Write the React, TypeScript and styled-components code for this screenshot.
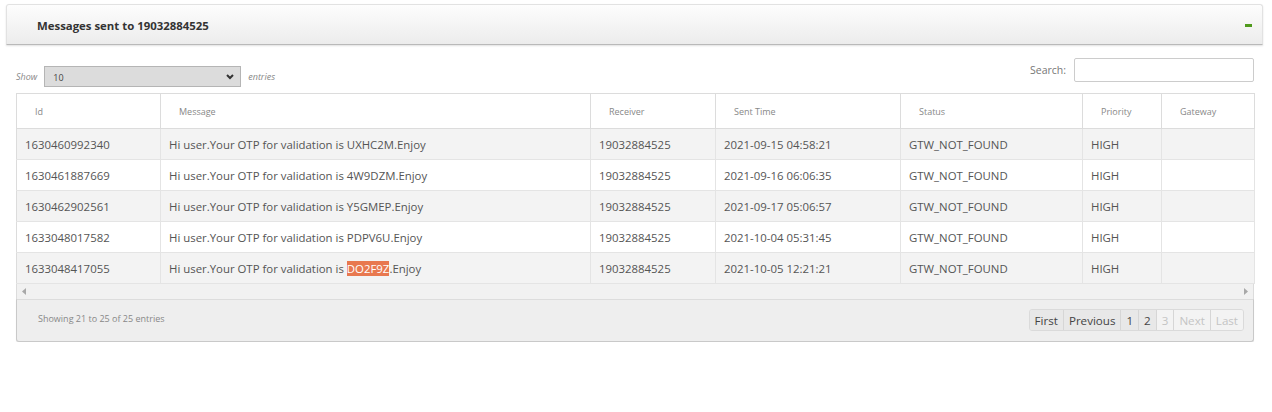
import React from "react";
import styled, { createGlobalStyle } from "styled-components";

const Global = createGlobalStyle`
  html, body { margin: 0; padding: 0; background: #fff; }
  body { font-family: "Open Sans", "Noto Sans", Arial, sans-serif; color: #555; }
`;

const Page = styled.div`
  padding: 4px 9px 0 6px;
  width: 1272px;
  box-sizing: border-box;
`;

const PanelHeader = styled.div`
  height: 41px;
  box-sizing: border-box;
  display: flex;
  align-items: center;
  justify-content: space-between;
  padding: 1px 10px 0 30px;
  background: linear-gradient(#fdfdfd, #ececec);
  border: 1px solid #e2e2e2;
  border-bottom: 1px solid #b9b9b9;
  border-radius: 3px 3px 0 0;
  box-shadow: 0 1px 2px rgba(0, 0, 0, 0.12);
`;

const Title = styled.h3`
  margin: 0;
  font-size: 11.4px;
  font-weight: 700;
  color: #333;
`;

const Minus = styled.span`
  display: block;
  width: 7px;
  height: 3px;
  background: #4f9a1c;
`;

const Body = styled.div`
  padding: 13px 9px 0 10px;
`;

const Controls = styled.div`
  display: flex;
  justify-content: space-between;
  align-items: flex-start;
  height: 35px;
`;

const LengthBox = styled.label`
  display: flex;
  align-items: center;
  gap: 7px;
  margin-top: 8px;
  font-size: 9px;
  font-style: italic;
  color: #888;
`;

const SelectBox = styled.div`
  position: relative;
  width: 197px;
  height: 21px;
  box-sizing: border-box;
  background: #dcdcdc;
  border: 1px solid #b5b5b5;
  font-size: 9px;
  font-style: normal;
  color: #444;
  display: flex;
  align-items: center;
  padding: 2px 0 0 8px;
`;

const Chevron = styled.svg`
  position: absolute;
  right: 6px;
  top: 7px;
`;

const SearchBox = styled.label`
  display: flex;
  align-items: center;
  gap: 8px;
  font-size: 10.5px;
  color: #777;
`;

const SearchInput = styled.div`
  width: 180px;
  height: 24px;
  box-sizing: border-box;
  border: 1px solid #ccc;
  border-radius: 2px;
  background: #fff;
`;

const Table = styled.table`
  width: 1238px;
  border-collapse: collapse;
  table-layout: fixed;
  border: 1px solid #dcdcdc;
`;

const Th = styled.th`
  height: 35px;
  padding: 0 0 0 18px;
  text-align: left;
  font-size: 9px;
  font-weight: 400;
  color: #888;
  border-right: 1px solid #dcdcdc;
  border-bottom: 1px solid #dcdcdc;
  box-sizing: border-box;
`;

const Row = styled.tr<{ $odd: boolean }>`
  background: ${(p) => (p.$odd ? "#f3f3f3" : "#fff")};
`;

const Td = styled.td`
  height: 31px;
  padding: 0 0 0 8px;
  font-size: 11.4px;
  color: #555;
  white-space: nowrap;
  border-right: 1px solid #e4e4e4;
  border-bottom: 1px solid #e4e4e4;
  box-sizing: border-box;
`;

const Mark = styled.span`
  background: #e8784f;
  color: #fff;
`;

const ScrollBar = styled.div`
  height: 15px;
  background: #f1f1f1;
  border-left: 1px solid #dcdcdc;
  border-right: 1px solid #dcdcdc;
  display: flex;
  align-items: center;
  justify-content: space-between;
  padding: 0 5px;
`;

const Footer = styled.div`
  height: 43px;
  box-sizing: border-box;
  background: #eeeeee;
  border: 1px solid #c9c9c9;
  border-top: 1px solid #dcdcdc;
  border-radius: 0 0 3px 3px;
  box-shadow: 0 1px 1px rgba(0, 0, 0, 0.08);
  display: flex;
  align-items: center;
  justify-content: space-between;
  padding: 0 9px 0 21px;
`;

const Info = styled.div`
  font-size: 9px;
  color: #888;
  margin-top: -5px;
`;

const Pager = styled.div`
  display: flex;
  border: 1px solid #dadada;
  border-radius: 3px;
  overflow: hidden;
  margin-top: -1px;
`;

const PageBtn = styled.span<{ $disabled?: boolean }>`
  height: 20px;
  line-height: 21px;
  padding: 0 5px;
  font-size: 11.6px;
  color: ${(p) => (p.$disabled ? "#c4c4c4" : "#444")};
  background: ${(p) => (p.$disabled ? "#f3f3f3" : "#e8e8e8")};
  border-left: 1px solid #d6d6d6;
  &:first-child { border-left: none; }
`;

const cols = [
  { name: "Id", w: 144 },
  { name: "Message", w: 430 },
  { name: "Receiver", w: 125 },
  { name: "Sent Time", w: 185 },
  { name: "Status", w: 182 },
  { name: "Priority", w: 79 },
  { name: "Gateway", w: 93 },
];

const rows = [
  ["1630460992340", "UXHC2M", "2021-09-15 04:58:21"],
  ["1630461887669", "4W9DZM", "2021-09-16 06:06:35"],
  ["1630462902561", "Y5GMEP", "2021-09-17 05:06:57"],
  ["1633048017582", "PDPV6U", "2021-10-04 05:31:45"],
  ["1633048417055", "DO2F9Z", "2021-10-05 12:21:21"],
];

export default function App() {
  return (
    <>
      <Global />
      <Page>
        <PanelHeader>
          <Title>Messages sent to 19032884525</Title>
          <Minus />
        </PanelHeader>
        <Body>
          <Controls>
            <LengthBox>
              Show
              <SelectBox>
                10
                <Chevron width="8" height="6" viewBox="0 0 8 6">
                  <path d="M1 1l3 3 3-3" stroke="#333" strokeWidth="2" fill="none" />
                </Chevron>
              </SelectBox>
              entries
            </LengthBox>
            <SearchBox>
              Search:
              <SearchInput />
            </SearchBox>
          </Controls>
          <Table>
            <colgroup>
              {cols.map((c) => (
                <col key={c.name} style={{ width: c.w }} />
              ))}
            </colgroup>
            <thead>
              <tr>
                {cols.map((c) => (
                  <Th key={c.name}>{c.name}</Th>
                ))}
              </tr>
            </thead>
            <tbody>
              {rows.map((r, i) => (
                <Row key={r[0]} $odd={i % 2 === 0}>
                  <Td>{r[0]}</Td>
                  <Td>
                    Hi user.Your OTP for validation is{" "}
                    {i === 4 ? <Mark>{r[1]}</Mark> : r[1]}.Enjoy
                  </Td>
                  <Td>19032884525</Td>
                  <Td>{r[2]}</Td>
                  <Td>GTW_NOT_FOUND</Td>
                  <Td>HIGH</Td>
                  <Td />
                </Row>
              ))}
            </tbody>
          </Table>
          <ScrollBar>
            <svg width="4" height="7" viewBox="0 0 4 7">
              <path d="M4 0v7L0 3.5z" fill="#a8a8a8" />
            </svg>
            <svg width="4" height="7" viewBox="0 0 4 7">
              <path d="M0 0v7l4-3.5z" fill="#a8a8a8" />
            </svg>
          </ScrollBar>
          <Footer>
            <Info>Showing 21 to 25 of 25 entries</Info>
            <Pager>
              <PageBtn>First</PageBtn>
              <PageBtn>Previous</PageBtn>
              <PageBtn>1</PageBtn>
              <PageBtn>2</PageBtn>
              <PageBtn $disabled>3</PageBtn>
              <PageBtn $disabled>Next</PageBtn>
              <PageBtn $disabled>Last</PageBtn>
            </Pager>
          </Footer>
        </Body>
      </Page>
    </>
  );
}
